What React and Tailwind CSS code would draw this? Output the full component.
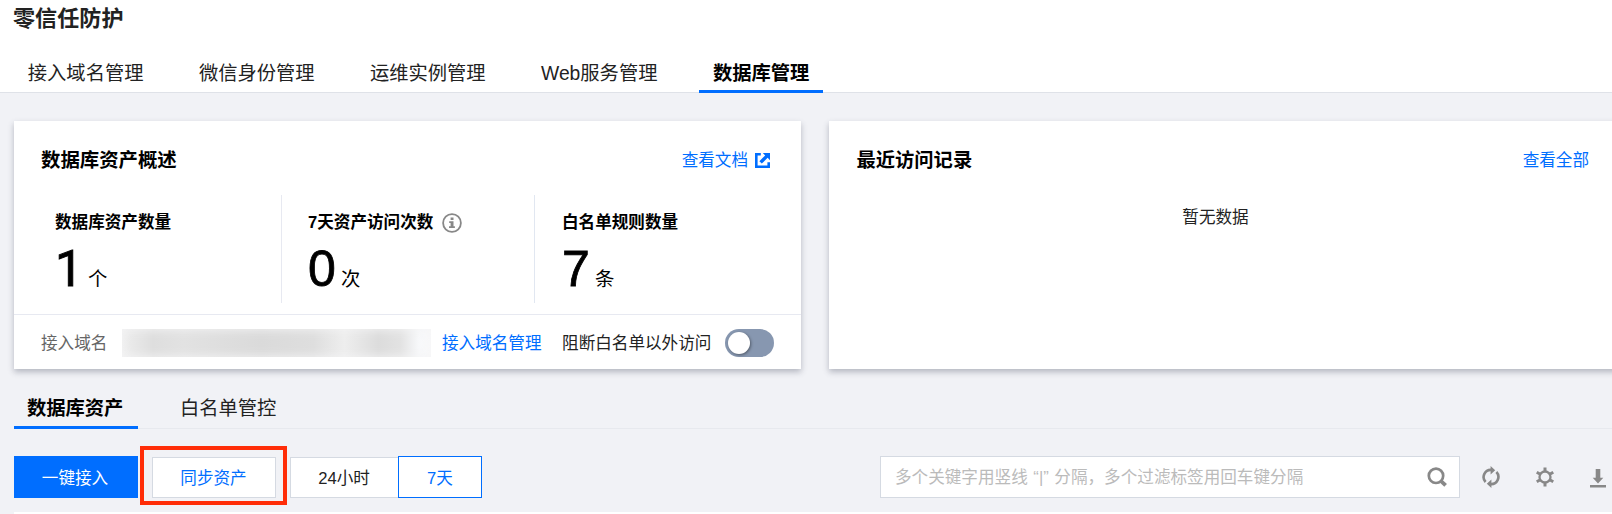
const tabs = ["接入域名管理", "微信身份管理", "运维实例管理", "Web服务管理"];

function InfoIcon() {
  return (
    <svg className="ml-[8.5px] h-5 w-5" viewBox="0 0 20 20" fill="none">
      <circle cx="10" cy="10" r="8.9" stroke="#888" strokeWidth="1.8" />
      <path d="M8.6 4.6h2.9v2.5H8.6zM7.2 8.3h4.3v5h1.4v1.8H7v-1.8h1.6V10.1H7.2z" fill="#888" />
    </svg>
  );
}

function ExternalIcon() {
  return (
    <svg className="ml-[7px] h-[15px] w-[15px]" viewBox="0 0 15 15" fill="none">
      <path d="M5.8 1.3H1.3v12.4h12.4V9.2" stroke="#006eff" strokeWidth="2.6" />
      <path d="M7.8 0H15v7.2l-2.4-2.4-5.8 5.8-2.4-2.4 5.8-5.8z" fill="#006eff" />
    </svg>
  );
}

function SearchIcon() {
  return (
    <svg className="h-5 w-5" viewBox="0 0 20 20" fill="none" stroke="#888">
      <circle cx="9" cy="8.8" r="7.2" strokeWidth="2.7" />
      <path d="M13.8 13.8l4.8 4.6" strokeWidth="3.8" />
    </svg>
  );
}

function RefreshIcon() {
  return (
    <svg className="h-[22px] w-[18px]" viewBox="0 0 18 22" fill="none">
      <path d="M3.6 16A7.2 7.2 0 0 1 9.5 3.9M14.4 6A7.2 7.2 0 0 1 8.5 18.1" stroke="#888" strokeWidth="2.6" />
      <path d="M8.6 0l4.6 4.2-4.6 4.3zM9.4 13.5V22l-4.6-4.2z" fill="#888" />
    </svg>
  );
}

function GearIcon() {
  return (
    <svg className="h-5 w-[18px]" viewBox="0 0 18 20" fill="none" stroke="#888">
      <circle cx="9" cy="10" r="5.5" strokeWidth="2.3" />
      <path d="M9 .5v4M9 15.5v4M.7 5.2l3.6 2.1M13.7 12.7l3.6 2.1M17.3 5.2l-3.6 2.1M4.3 12.7l-3.6 2.1" strokeWidth="3" />
    </svg>
  );
}

function DownloadIcon() {
  return (
    <svg className="h-[19px] w-4" viewBox="0 0 16 19" fill="#888">
      <path d="M5.7 0h4.6v8.8h3L8 14.6 2.7 8.8h3zM0 16h16v2.6H0z" />
    </svg>
  );
}

function Stat({ label, value, unit, info, className, valueClass }) {
  return (
    <div className={"h-[108px] pt-[16px] text-black " + className}>
      <div className="flex h-6 items-center text-[16.6px] font-bold">
        {label}
        {info && <InfoIcon />}
      </div>
      <div className="mt-[5px] flex items-baseline gap-[5px] leading-[58px]">
        <span className={"w-[28px] text-[50px] " + valueClass}>{value}</span>
        <span className="text-[19.4px]">{unit}</span>
      </div>
    </div>
  );
}

const card = "h-[248px] bg-white shadow-[0_3px_6px_rgba(54,58,80,0.32)] ";

export default function App() {
  return (
    <div className="h-[514px] w-[1612px] overflow-hidden bg-[#f1f2f6] font-['Liberation_Sans','Noto_Sans_CJK_SC',sans-serif] text-[16.6px] whitespace-nowrap text-[#222]">
      <header className="h-[93px] border-b border-[#dfe2e8] bg-white">
        <h1 className="pt-[4px] pl-[13px] text-[22.1px] leading-[30px] font-bold text-[#222]">零信任防护</h1>
        <nav className="mt-[19px] flex pl-[14px] text-[19.3px] leading-[42px]">
          {tabs.map((t) => (
            <span key={t} className="mr-[27.8px] px-[13.8px]">{t}</span>
          ))}
          <span className="h-[40px] border-b-[3px] border-[#006eff] px-[13.9px] font-bold text-black">数据库管理</span>
        </nav>
      </header>

      <main className="pl-[14px]">
        <div className="flex gap-[28px] pt-[28px]">
          <section className={card + "w-[787px] shrink-0"}>
            <div className="flex h-[74px] items-center justify-between pt-[5px] pr-[31px] pl-[27px]">
              <h2 className="text-[19.4px] font-bold text-black">数据库资产概述</h2>
              <a className="flex items-center pt-px text-[#006eff]">查看文档<ExternalIcon /></a>
            </div>
            <div className="flex">
              <Stat className="w-[267px] pl-[41px]" label="数据库资产数量" value="1" unit="个" valueClass="font-['Roboto'] [-webkit-text-stroke:0.9px_#000]" />
              <Stat className="w-[253px] border-l border-[#e7e9f1] pl-[26px]" label="7天资产访问次数" value="0" unit="次" info valueClass="[-webkit-text-stroke:0.8px_#000]" />
              <Stat className="w-[240px] border-l border-[#e1e7f1] pl-[27px]" label="白名单规则数量" value="7" unit="条" valueClass="[-webkit-text-stroke:0.8px_#000]" />
            </div>
            <div className="mt-[11px] flex h-[55px] items-center border-t border-[#e7e9f1] pt-[2px] pl-[27px]">
              <span className="w-[81px] pt-[2px] text-[#666]">接入域名</span>
              <span className="h-[28px] w-[309px] bg-[linear-gradient(90deg,#eee_0%,#dedede_10%,#e2e2e2_20%,#dadada_45%,#dedede_62%,#eee_72%,#dcdcdc_83%,#e2e2e2_90%,#f7f8fa_96%,#fafafb_100%)] shadow-[inset_0_0_9px_2px_rgba(244,244,246,0.75)]" />
              <a className="ml-[11px] pt-[2px] text-[#006eff]">接入域名管理</a>
              <span className="ml-[20.5px] pt-[2px]">阻断白名单以外访问</span>
              <span className="ml-[13.5px] flex h-[28px] w-[49px] items-center rounded-full bg-[#8797b0] pl-[3px]">
                <span className="h-[22px] w-[22px] rounded-full bg-white shadow-[1px_1px_3px_rgba(0,0,0,0.4)]" />
              </span>
            </div>
          </section>

          <section className={card + "w-[800px] shrink-0"}>
            <div className="flex h-[74px] items-center justify-between pt-[6px] pr-[40px] pl-[27.5px]">
              <h2 className="text-[19.3px] font-bold text-black">最近访问记录</h2>
              <a className="text-[#006eff]">查看全部</a>
            </div>
            <p className="mt-[11px] w-[773px] text-center leading-6">暂无数据</p>
          </section>
        </div>

        <nav className="mt-[20px] flex h-[40px] border-b border-[#e7e9ee] text-[19.3px] leading-[40px]">
          <span className="h-[40px] w-[124px] border-b-[3px] border-[#006eff] pl-[13px] font-bold text-black">数据库资产</span>
          <span className="ml-[42px]">白名单管控</span>
        </nav>

        <div className="mt-[17px] flex h-[59px] items-center">
          <button className="mt-[3px] h-[42px] w-[124px] bg-[#006eff] pt-[4px] pr-[2px] text-white">一键接入</button>
          <div className="ml-[2px] flex h-[59px] w-[147px] items-center justify-center border-[4px] border-[#ff2d08] pt-[3px]">
            <button className="h-[41px] w-[124px] border border-[#d5dae2] bg-white pt-[4px] text-[#006eff]">同步资产</button>
          </div>
          <button className="mt-[3px] ml-[3px] h-[41px] w-[108px] border border-r-0 border-[#d5dae2] bg-white pt-[4px] pr-px">24小时</button>
          <button className="mt-[3px] h-[42px] w-[84px] border-[1.4px] border-[#006eff] bg-white pt-[4px] text-[#006eff]">7天</button>
          <div className="mt-[3px] ml-[398px] flex h-[42px] w-[580px] items-center justify-between border border-[#d5dae2] bg-white pr-[12px] pl-[14px] text-[#bbb]">
            <span className="pt-[3px] [word-spacing:1px]">多个关键字用竖线 “|” 分隔，多个过滤标签用回车键分隔</span>
            <SearchIcon />
          </div>
          <div className="mt-[3px] ml-[22px] flex items-center">
            <RefreshIcon />
            <span className="ml-[36px] flex"><GearIcon /></span>
            <span className="ml-[36px] flex pt-[2px]"><DownloadIcon /></span>
          </div>
        </div>
        <div className="mt-[7px] h-2 w-[1598px] bg-white" />
      </main>
    </div>
  );
}
